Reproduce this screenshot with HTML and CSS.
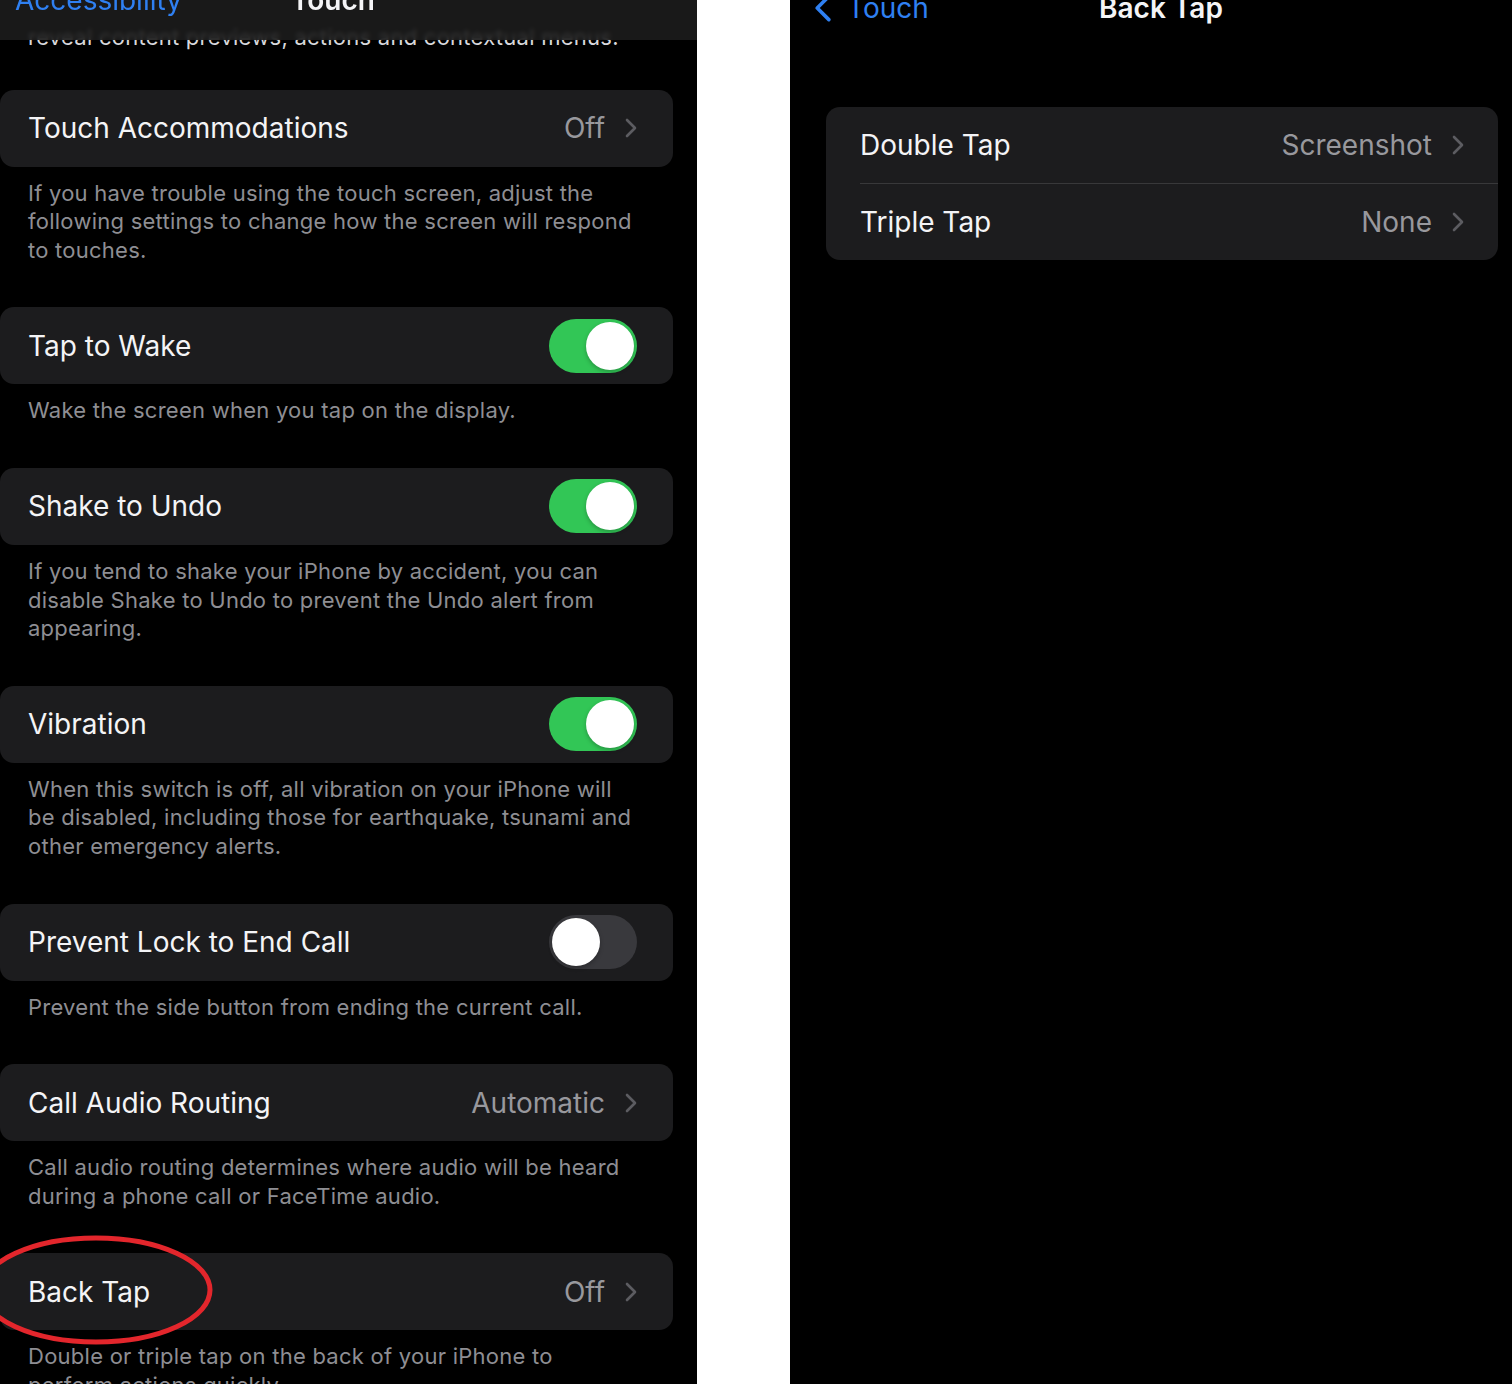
FILE: index.html
```html
<!DOCTYPE html>
<html lang="en">
<head>
    <meta charset="UTF-8">
    <title>Touch | Back Tap</title>
    <link rel="stylesheet" href="styles.css">
</head>
<body>

<div class="shots">

    <!-- left screen: Accessibility > Touch -->
    <section class="phone left">
        <header class="navbar">
            <span class="back">Accessibility</span>
            <h1>Touch</h1>
        </header>

        <div class="content">
            <p class="note">reveal content previews, actions and contextual menus.</p>

            <div class="cell">
                <span class="label">Touch Accommodations</span>
                <span class="value">Off</span>
                <svg class="chev" viewBox="0 0 12 20"><polyline points="2,2 10,10 2,18"/></svg>
            </div>
            <p class="note">If you have trouble using the touch screen, adjust the following settings to change how the screen will respond to touches.</p>

            <div class="cell">
                <span class="label">Tap to Wake</span>
                <span class="switch on"></span>
            </div>
            <p class="note">Wake the screen when you tap on the display.</p>

            <div class="cell">
                <span class="label">Shake to Undo</span>
                <span class="switch on"></span>
            </div>
            <p class="note">If you tend to shake your iPhone by accident, you can disable Shake to Undo to prevent the Undo alert from appearing.</p>

            <div class="cell">
                <span class="label">Vibration</span>
                <span class="switch on"></span>
            </div>
            <p class="note">When this switch is off, all vibration on your iPhone will be disabled, including those for earthquake, tsunami and other emergency alerts.</p>

            <div class="cell">
                <span class="label">Prevent Lock to End Call</span>
                <span class="switch off"></span>
            </div>
            <p class="note">Prevent the side button from ending the current call.</p>

            <div class="cell">
                <span class="label">Call Audio Routing</span>
                <span class="value">Automatic</span>
                <svg class="chev" viewBox="0 0 12 20"><polyline points="2,2 10,10 2,18"/></svg>
            </div>
            <p class="note">Call audio routing determines where audio will be heard during a phone call or FaceTime audio.</p>

            <div class="cell">
                <span class="label">Back Tap</span>
                <span class="value">Off</span>
                <svg class="chev" viewBox="0 0 12 20"><polyline points="2,2 10,10 2,18"/></svg>
            </div>
            <p class="note">Double or triple tap on the back of your iPhone to perform actions quickly.</p>
        </div>

        <!-- red marker drawn over the Back Tap row -->
        <svg class="circled" viewBox="0 0 240 120">
            <ellipse cx="96" cy="58" rx="114" ry="52"/>
        </svg>
    </section>

    <div class="divider"></div>

    <!-- right screen: Touch > Back Tap -->
    <section class="phone right">
        <header class="navbar">
            <span class="back">
                <svg class="back-chev" viewBox="0 0 18 26"><polyline points="15,2 4,13 15,24"/></svg>
                Touch
            </span>
            <h1>Back Tap</h1>
        </header>

        <div class="group">
            <div class="group-row">
                <span class="label">Double Tap</span>
                <span class="value">Screenshot</span>
                <svg class="chev" viewBox="0 0 12 20"><polyline points="2,2 10,10 2,18"/></svg>
            </div>
            <div class="group-row">
                <span class="label">Triple Tap</span>
                <span class="value">None</span>
                <svg class="chev" viewBox="0 0 12 20"><polyline points="2,2 10,10 2,18"/></svg>
            </div>
        </div>
    </section>

</div>

</body>
</html>
```

FILE: styles.css
```css
* { box-sizing: border-box; }
body { margin: 0; background: #fff; font-family: Inter, "Noto Sans", sans-serif; -webkit-font-smoothing: antialiased; }

.shots { display: grid; grid-template-columns: 697px 93px 722px; height: 1384px; overflow: hidden; }
.divider { background: #fff; }
.phone { position: relative; background: #000; color: #f4f4f6; overflow: hidden; }

/* nav bars */
.navbar { display: grid; grid-template-columns: 1fr auto 1fr; align-items: start; height: 40px; font-size: 28px; line-height: 34px; }
.navbar h1 { margin: 0; font-size: 28px; font-weight: 600; }
.navbar .back { color: #2f80f2; display: flex; align-items: center; }
.left .navbar { position: absolute; top: 0; left: 0; right: 0; z-index: 1; padding: 0 46px 0 15px; background: rgba(29, 29, 29, 0.88); backdrop-filter: blur(2px); }
.left .navbar > * { margin-top: -17px; }
.right .navbar { padding: 0 3px 0 23px; }
.right .navbar > * { margin-top: -9px; }
.back-chev { width: 19px; height: 28px; margin-right: 15px; fill: none; stroke: #2f80f2; stroke-width: 3.4; stroke-linecap: round; stroke-linejoin: round; }

/* left list */
.content { padding-top: 6px; }
.note { margin: 0; padding: 12px 64px 43px 28px; font-size: 22px; letter-spacing: 0.25px; line-height: 28.6px; color: #8e8e93; }
.content > .note:first-child { padding-top: 17px; padding-bottom: 38px; color: #d8d8dc; }
.cell { display: flex; align-items: center; width: 673px; height: 77px; padding: 0 36px 0 28px; background: #1c1c1e; border-radius: 14px; font-size: 28px; }
.label { flex: 1; }
.value { color: #98989d; margin-right: 20px; }
.chev { width: 12px; height: 20px; fill: none; stroke: #5c5c61; stroke-width: 2.6; stroke-linecap: round; stroke-linejoin: round; }

.switch { display: flex; width: 88px; height: 54px; padding: 3px; border-radius: 27px; }
.switch::after { content: ""; width: 48px; height: 48px; border-radius: 50%; background: #fff; box-shadow: 0 2px 4px rgba(0, 0, 0, 0.25); }
.switch.on { background: #32c656; justify-content: flex-end; }
.switch.off { background: #39393d; justify-content: flex-start; }

.circled { position: absolute; left: 0; top: 1232px; width: 240px; height: 120px; overflow: visible; fill: none; stroke: #e3262c; stroke-width: 5; }

/* right list */
.group { margin: 67px 14px 0 36px; background: #1c1c1e; border-radius: 14px; font-size: 28px; }
.group-row { display: flex; align-items: center; height: 76px; margin-left: 34px; padding-right: 34px; }
.group-row + .group-row { height: 77px; border-top: 1px solid #38383a; }
```
